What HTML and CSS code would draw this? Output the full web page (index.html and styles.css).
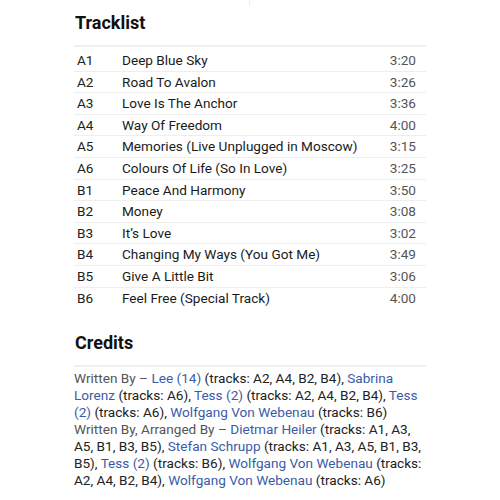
FILE: index.html
```html
<!DOCTYPE html>
<html>
<head>
    <title>Tracklist</title>
    <link rel="stylesheet" href="styles.css">
</head>
<body>
    <div class="topline"></div>
    <div class="release">
        <h2>Tracklist</h2>
        <table class="tracklist">
            <tr><td class="pos">A1</td><td class="title">Deep Blue Sky</td><td class="dur">3:20</td></tr>
            <tr><td class="pos">A2</td><td class="title">Road To Avalon</td><td class="dur">3:26</td></tr>
            <tr><td class="pos">A3</td><td class="title">Love Is The Anchor</td><td class="dur">3:36</td></tr>
            <tr><td class="pos">A4</td><td class="title">Way Of Freedom</td><td class="dur">4:00</td></tr>
            <tr><td class="pos">A5</td><td class="title">Memories (Live Unplugged in Moscow)</td><td class="dur">3:15</td></tr>
            <tr><td class="pos">A6</td><td class="title">Colours Of Life (So In Love)</td><td class="dur">3:25</td></tr>
            <tr><td class="pos">B1</td><td class="title">Peace And Harmony</td><td class="dur">3:50</td></tr>
            <tr><td class="pos">B2</td><td class="title">Money</td><td class="dur">3:08</td></tr>
            <tr><td class="pos">B3</td><td class="title">It’s Love</td><td class="dur">3:02</td></tr>
            <tr><td class="pos">B4</td><td class="title">Changing My Ways (You Got Me)</td><td class="dur">3:49</td></tr>
            <tr><td class="pos">B5</td><td class="title">Give A Little Bit</td><td class="dur">3:06</td></tr>
            <tr><td class="pos">B6</td><td class="title">Feel Free (Special Track)</td><td class="dur">4:00</td></tr>
        </table>

        <h2 class="credits-title">Credits</h2>
        <div class="credits">
            <p><span class="role">Written By –</span> <a href="#">Lee (14)</a> (tracks: A2, A4, B2, B4), <a href="#">Sabrina Lorenz</a> (tracks: A6), <a href="#">Tess (2)</a> (tracks: A2, A4, B2, B4), <a href="#">Tess (2)</a> (tracks: A6), <a href="#">Wolfgang Von Webenau</a> (tracks: B6)</p>
            <p><span class="role">Written By, Arranged By –</span> <a href="#">Dietmar Heiler</a> (tracks: A1, A3, A5, B1, B3, B5), <a href="#">Stefan Schrupp</a> (tracks: A1, A3, A5, B1, B3, B5), <a href="#">Tess (2)</a> (tracks: B6), <a href="#">Wolfgang Von Webenau</a> (tracks: A2, A4, B2, B4), <a href="#">Wolfgang Von Webenau</a> (tracks: A6)</p>
        </div>
    </div>
</body>
</html>
```

FILE: styles.css
```css
body {
    margin: 0;
    font-family: Roboto, "Liberation Sans", sans-serif;
    background-color: #fff;
    color: #1a1a1a;
}
.topline {
    width: 1px;
    height: 6px;
    margin-left: 249px;
    background-color: #eee;
}
.release {
    width: 352px;
    margin-left: 74px;
}
h2 {
    margin: 6px 0 0 1px;
    font-size: 18px;
    line-height: 22px;
    font-weight: bold;
    color: #111;
}
.tracklist {
    width: 100%;
    margin-top: 11px;
    border-collapse: collapse;
    border-top: 2px solid #f0f0f0;
    font-size: 13.6px;
}
.tracklist td {
    padding: 2px 0;
    line-height: 16.6px;
    border-bottom: 1px solid #eee;
    vertical-align: middle;
}
.tracklist tr:first-child td {
    padding-top: 5px;
}
.tracklist tr:last-child td {
    border-bottom: none;
}
.tracklist .pos {
    width: 45px;
    padding-left: 3px;
    color: #222;
}
.title {
    color: #1a1a1a;
}
.tracklist .dur {
    text-align: right;
    padding-right: 10px;
    color: #555;
}
.credits-title {
    margin-top: 24px;
}
.credits {
    margin-top: 11px;
    border-top: 2px solid #f0f0f0;
    padding-top: 3px;
    font-size: 13.6px;
    line-height: 17px;
    color: #222;
}
.credits p {
    margin: 0;
}
.role {
    color: #555;
}
.credits a {
    color: #3b5ba8;
    text-decoration: none;
}
```
